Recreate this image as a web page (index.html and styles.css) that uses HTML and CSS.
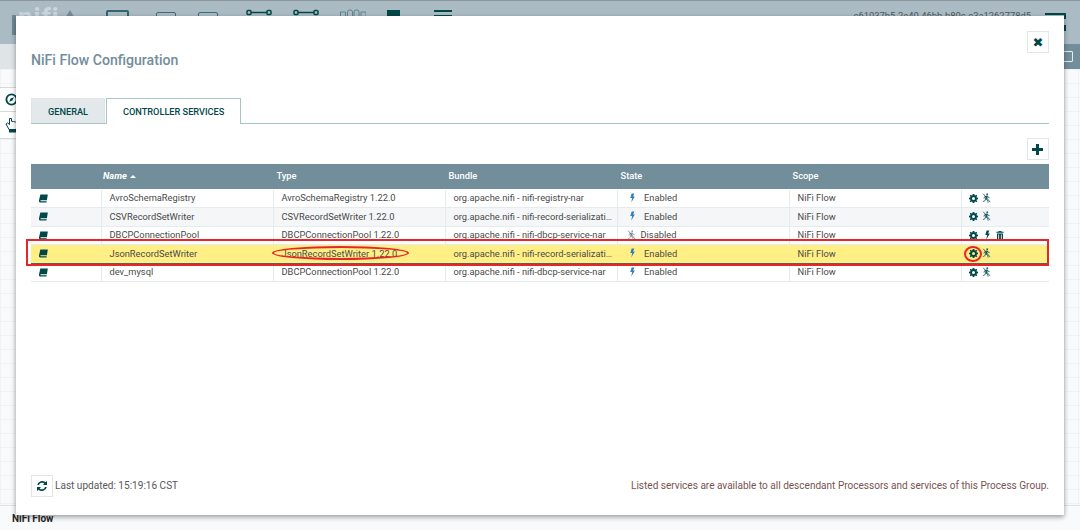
FILE: index.html
```html
<!DOCTYPE html>
<html lang="en">
<head>
<meta charset="utf-8">
<title>NiFi Flow Configuration</title>
<link rel="stylesheet" href="styles.css">
</head>
<body>
<svg class="defs" width="0" height="0" aria-hidden="true">
  <symbol id="book" viewBox="0 0 10 9"><path d="M1.500 0h8.300L8.800 6.400H1.900a.8.800 0 0 0 0 1.200h6.700l-.3 1.400H1.200C.2 9 0 8 0 6.800z"/></symbol>
  <symbol id="bolt" viewBox="0 0 6 11"><path d="M2 0h3.200L3.700 3.600h2.100L1.500 11l1.100-5.600H.4z"/></symbol>
  <symbol id="gear" viewBox="0 0 12 12"><path fill-rule="evenodd" d="M4.900 0h2.200l.3 1.600 1 .4L9.800 1l1.200 1.200-1 1.400.4 1 1.600.3v2.200l-1.600.3-.4 1 1 1.400L9.800 11l-1.400-1-1 .4-.3 1.600H4.900l-.3-1.600-1-.4-1.400 1L1 9.800l1-1.400-.4-1L0 7.100V4.900l1.600-.3.4-1-1-1.400L2.200 1l1.400 1 1-.4zM6 4a2 2 0 1 0 0 4 2 2 0 0 0 0-4z"/></symbol>
  <symbol id="run" viewBox="0 0 11 12"><circle cx="6.400" cy="1.300" r="1.200"/><path d="M5.200 3l2 .3 1 1.700 1.600.6-.3.8-2.100-.7-.6-1-.8 2.400 1.600 1.600.4 3h-1l-.5-2.500-1.900-1.400-.7 1.900-2.600 1.200-.4-.9 2.200-1 1.200-4-1 .4-.6 1.500-.9-.3.800-2z"/><path class="slash" d="M1.500.8l8.500 10.200"/></symbol>
  <symbol id="trash" viewBox="0 0 9 11"><path fill-rule="evenodd" d="M3 0h3l.5 1H9v1.200H0V1h2.500zM.8 3h7.400v8H.8zM2.400 4.300v5.400h1V4.300zM5.600 4.300v5.400h1V4.300z"/></symbol>
</svg>

<div class="app">
  <header class="topbar">
    <div class="logo"><span class="logo-bar"></span><span class="logo-text">nifi</span><span class="logo-tri"></span></div>
    <div class="toolbar">
      <span class="tool tool-box"></span>
      <span class="tool tool-frame"></span>
      <span class="tool tool-frame"></span>
      <svg class="tool-link" viewBox="0 0 26 8"><rect x="1" y="1.500" width="4" height="4" rx="1"/><rect x="21" y="1.500" width="4" height="4" rx="1"/><path d="M5 3.500h16"/></svg>
      <svg class="tool-link" viewBox="0 0 26 8"><rect x="1" y="1.500" width="4" height="4" rx="1"/><rect x="21" y="1.500" width="4" height="4" rx="1"/><path d="M5 3.500h16"/></svg>
      <svg class="tool-group" viewBox="0 0 26 10"><rect x=".5" y="3" width="5" height="7"/><rect x="7.500" y="1" width="5" height="9" rx="2"/><rect x="14" y="1" width="5" height="9" rx="2"/><rect x="21" y="3" width="5" height="7"/></svg>
      <span class="tool-solid"></span>
      <span class="tool-lines"></span>
    </div>
    <div class="uuid">c61037b5-2e40-46bb-b80c-c3a1262778d5</div>
    <div class="burger"></div>
  </header>
  <div class="subbar">
    <div class="subbar-left"></div>
    <div class="subbar-right"><span class="note-icon"></span></div>
  </div>
  <div class="canvas">
    <div class="palette">
      <div class="palette-row palette-first">
        <svg class="compass" viewBox="0 0 14 14"><circle cx="7" cy="7" r="5.500"/><path class="needle" d="M9.500 4.500L8 8 4.500 9.500 6 6z"/></svg>
      </div>
      <div class="palette-row">
        <svg class="hand" viewBox="0 0 14 16"><path d="M4.500 1.500v6L2.500 6 1 7l3 5.500h7l1.500-4V5.500L10.500 5 8.500 4.500l-2-.2V1.500z"/><rect x="4" y="13" width="7.500" height="2.500"/></svg>
      </div>
    </div>
  </div>
  <div class="breadcrumb"><span class="flow-name">NiFi Flow</span></div>

  <section class="dialog">
    <div class="dialog-head">
      <h1 class="dialog-title">NiFi Flow Configuration</h1>
      <button class="icon-btn" type="button" aria-label="Close"><span class="glyph-x">&#10006;</span></button>
    </div>
    <div class="tabs">
      <div class="tab">GENERAL</div>
      <div class="tab tab-active">CONTROLLER SERVICES</div>
    </div>
    <div class="add-row">
      <button class="icon-btn" type="button" aria-label="Add"><span class="glyph-plus"></span></button>
    </div>
    <table class="grid">
      <colgroup>
        <col class="c-icon"><col class="c-wide"><col class="c-wide"><col class="c-wide"><col class="c-wide"><col class="c-wide"><col class="c-act">
      </colgroup>
      <thead>
        <tr><th></th><th class="th-name">Name <span class="sort"></span></th><th>Type</th><th>Bundle</th><th>State</th><th>Scope</th><th></th></tr>
      </thead>
      <tbody>
        <tr>
          <td class="td-icon"><svg class="i-book"><use href="#book"/></svg></td>
          <td>AvroSchemaRegistry</td><td>AvroSchemaRegistry 1.22.0</td><td>org.apache.nifi - nifi-registry-nar</td>
          <td class="td-state"><svg class="i-bolt"><use href="#bolt"/></svg>Enabled</td><td>NiFi Flow</td>
          <td class="td-act"><svg class="i-gear"><use href="#gear"/></svg><svg class="i-run"><use href="#run"/></svg></td>
        </tr>
        <tr class="even">
          <td class="td-icon"><svg class="i-book"><use href="#book"/></svg></td>
          <td>CSVRecordSetWriter</td><td>CSVRecordSetWriter 1.22.0</td><td>org.apache.nifi - nifi-record-serializati…</td>
          <td class="td-state"><svg class="i-bolt"><use href="#bolt"/></svg>Enabled</td><td>NiFi Flow</td>
          <td class="td-act"><svg class="i-gear"><use href="#gear"/></svg><svg class="i-run"><use href="#run"/></svg></td>
        </tr>
        <tr>
          <td class="td-icon"><svg class="i-book"><use href="#book"/></svg></td>
          <td>DBCPConnectionPool</td><td>DBCPConnectionPool 1.22.0</td><td>org.apache.nifi - nifi-dbcp-service-nar</td>
          <td class="td-state td-disabled"><svg class="i-run i-run-off"><use href="#run"/></svg>Disabled</td><td>NiFi Flow</td>
          <td class="td-act"><svg class="i-gear"><use href="#gear"/></svg><svg class="i-bolt-dark"><use href="#bolt"/></svg><svg class="i-trash"><use href="#trash"/></svg></td>
        </tr>
        <tr class="selected">
          <td class="td-icon"><svg class="i-book"><use href="#book"/></svg></td>
          <td>JsonRecordSetWriter</td><td>JsonRecordSetWriter 1.22.0</td><td>org.apache.nifi - nifi-record-serializati…</td>
          <td class="td-state"><svg class="i-bolt"><use href="#bolt"/></svg>Enabled</td><td>NiFi Flow</td>
          <td class="td-act"><svg class="i-gear"><use href="#gear"/></svg><svg class="i-run"><use href="#run"/></svg></td>
        </tr>
        <tr>
          <td class="td-icon"><svg class="i-book"><use href="#book"/></svg></td>
          <td>dev_mysql</td><td>DBCPConnectionPool 1.22.0</td><td>org.apache.nifi - nifi-dbcp-service-nar</td>
          <td class="td-state"><svg class="i-bolt"><use href="#bolt"/></svg>Enabled</td><td>NiFi Flow</td>
          <td class="td-act"><svg class="i-gear"><use href="#gear"/></svg><svg class="i-run"><use href="#run"/></svg></td>
        </tr>
      </tbody>
    </table>
    <div class="dialog-foot">
      <button class="icon-btn" type="button" aria-label="Refresh">
        <svg class="i-refresh" viewBox="0 0 12 12"><path d="M1.200 5A5 5 0 0 1 9.500 2.300L11 1v4H7l1.300-1.400A3.200 3.200 0 0 0 3 5zM10.800 7A5 5 0 0 1 2.500 9.700L1 11V7h4L3.700 8.400A3.200 3.200 0 0 0 9 7z"/></svg>
      </button>
      <span class="updated">Last updated: 15:19:16 CST</span>
      <span class="foot-note">Listed services are available to all descendant Processors and services of this Process Group.</span>
    </div>
  </section>

  <div class="mark mark-rect"></div>
  <div class="mark mark-oval"></div>
  <div class="mark mark-circle"></div>
</div>
</body>
</html>
```

FILE: styles.css
```css
* { box-sizing: border-box; }
html, body { margin: 0; padding: 0; }
body { font-family: Roboto, "Liberation Sans", sans-serif; background: #f9fafb; }
.defs { position: absolute; }

.app {
  position: relative;
  width: 1080px;
  height: 530px;
  overflow: hidden;
  display: flex;
  flex-direction: column;
  background: #f9fafb;
}

/* Dimmed page behind the dialog */
.topbar {
  flex: none;
  height: 44px;
  background: #aabbc3;
  border-top: 1px solid #8b979c;
  display: flex;
  align-items: flex-start;
  position: relative;
}
.logo { width: 106px; padding: 3px 0 0 12px; display: flex; height: 40px; flex: none; }
.logo-bar { width: 4px; height: 20px; margin-top: 11px; background: #6f8893; flex: none; }
.logo-text { font: 700 26px/26px Roboto, sans-serif; color: #c9d6dc; width: 46px; letter-spacing: 1px; margin-left: 2px; }
.logo-tri { width: 0; height: 0; margin-top: 6px; border-left: 6px solid transparent; border-right: 6px solid transparent; border-bottom: 10px solid #728e9b; margin-left: 0; }
.toolbar { display: flex; align-items: flex-start; flex: none; }
.tool { display: block; }
.tool-box { width: 23px; height: 20px; margin: 9px 0 0 0; border: 2px solid #2f6670; border-radius: 2px; }
.tool-frame { width: 20px; height: 20px; margin: 11px 0 0 0; border: 1px solid #3d6e76; border-radius: 2px; }
.tool-box + .tool-frame { margin-left: 27px; }
.tool-frame + .tool-frame { margin-left: 22px; }
.tool-link { width: 26px; height: 8px; margin: 8px 0 0 0; fill: none; stroke: #004849; stroke-width: 1.500; }
.tool-frame + .tool-link { margin-left: 28px; }
.tool-link + .tool-link { margin-left: 21px; }
.tool-group { width: 26px; height: 10px; margin: 8px 0 0 21px; fill: none; stroke: #3d6e76; stroke-width: .7; }
.tool-solid { width: 13px; height: 7px; margin: 9px 0 0 21px; background: #004849; }
.tool-lines { width: 18px; height: 7px; margin: 9px 0 0 34px; border-top: 2px solid #004849; border-bottom: 2px solid #004849; }
.uuid { position: absolute; left: 841px; top: 9px; width: 190px; text-align: right; font-size: 9.400px; line-height: 12px; color: #4a5a60; white-space: nowrap; }
.burger { position: absolute; left: 1045px; top: 12px; width: 21px; height: 18px; border-top: 2px solid #004849; border-right: 2px dashed #004849; }

.subbar { flex: none; height: 25px; display: flex; }
.subbar-left { width: 540px; background: #dfe4e7; }
.subbar-right { flex: 1; background: #dfe4e7 linear-gradient(90deg, #dfe4e7 97%, #728e9b 97%); position: relative; }
.note-icon { position: absolute; right: 7px; top: 7px; width: 10px; height: 11px; border: 1px solid #e6ecef; border-radius: 1px; }

.canvas {
  flex: 1;
  position: relative;
  background-color: #f9fafb;
  background-image:
    linear-gradient(#f0f2f4 1px, transparent 1px),
    linear-gradient(90deg, #f0f2f4 1px, transparent 1px);
  background-size: 14px 14px;
}
.palette { position: absolute; left: 0; top: 18px; width: 16px; background: #fff; border-top: 1px solid #d4dade; border-bottom: 1px solid #d4dade; }
.palette-row { height: 26px; display: flex; align-items: center; padding-left: 5px; }
.palette-first { height: 24px; border-bottom: 1px solid #d4dade; }
.compass { width: 13px; height: 13px; fill: none; stroke: #004849; stroke-width: 2; flex: none; }
.needle { fill: #004849; stroke: none; }
.hand { width: 14px; height: 16px; fill: #fff; stroke: #004849; stroke-width: 1; flex: none; }
.hand rect { fill: #004849; stroke: none; }
.breadcrumb { flex: none; height: 25px; border-top: 1px solid #dde1e4; padding: 7px 0 0 12px; background: #f9fafb; }
.flow-name { display: block; font-size: 10px; line-height: 12px; font-weight: 700; color: #262626; }

/* Dialog */
.dialog {
  position: absolute;
  left: 16px;
  top: 16px;
  width: 1048px;
  height: 499px;
  background: #fff;
  padding: 15px 15px 19px;
  display: flex;
  flex-direction: column;
  box-shadow: 0 2px 5px rgba(0, 0, 0, .4);
}
.dialog-head { flex: none; height: 67px; display: flex; justify-content: space-between; align-items: flex-start; }
.dialog-title { margin: 21px 0 0; font-size: 14.100px; line-height: 16px; font-weight: 500; color: #728e9b; }
.icon-btn {
  flex: none;
  width: 22px;
  height: 22px;
  padding: 0;
  background: #fff;
  border: 1px solid #dfe7ea;
  display: flex;
  align-items: center;
  justify-content: center;
}
.glyph-x { font-size: 13px; line-height: 13px; color: #004849; font-family: "DejaVu Sans", sans-serif; }
.glyph-plus { width: 11px; height: 11px; margin-left: -1px; background: linear-gradient(#004849, #004849) center / 11px 3px no-repeat, linear-gradient(#004849, #004849) center / 3px 11px no-repeat; }

.tabs { flex: none; display: flex; height: 26px; border-bottom: 1px solid #a9c4c4; }
.tab {
  height: 25px;
  padding: 0 16px;
  font-size: 9.200px;
  line-height: 25px;
  font-weight: 500;
  color: #004849;
  background: #e3e8eb;
  border-top: 1px solid #dfe4e7;
  border-right: 1px solid #dfe4e7;
  border-left: 1px solid #dfe4e7;
  margin-right: 1px;
}
.tab-active { height: 26px; background: #fff; border-color: #a9c4c4; }

.add-row { flex: none; display: flex; justify-content: flex-end; margin: 14px 0 4px; }

.grid { flex: none; width: 1018px; table-layout: fixed; border-collapse: collapse; font-size: 9.300px; }
.c-icon { width: 70px; }
.c-wide { width: 172px; }
.c-act { width: 88px; }
.grid th {
  height: 25px;
  background: #728e9b;
  color: #fff;
  font-weight: 500;
  text-align: left;
  padding: 0 0 2px 3.500px;
  border-bottom: 1px solid #fff;
}
.grid .th-name { font-style: italic; font-weight: 700; padding-left: 2px; }
.sort { display: inline-block; width: 0; height: 0; margin: 0 0 1px 1px; border-left: 3px solid transparent; border-right: 3px solid transparent; border-bottom: 3px solid #fff; }
.grid td {
  height: 18.500px;
  padding: 0 0 0 8px;
  line-height: 12px;
  color: #4a4a4a;
  white-space: nowrap;
  overflow: hidden;
  border-bottom: 1px solid #e6ebee;
  border-left: 1px solid #e6ebee;
}
.grid td.td-icon { border-left: none; padding-left: 8px; }
.even td { background: #f4f6f7; }
.selected td {
  background: #ffef85;
  border-top: 1px solid #5e5e5e;
  border-bottom: 1px solid #5e5e5e;
  border-left-color: #ffef85;
}
.grid td.td-state { padding-left: 12.500px; }
.grid td.td-disabled { padding-left: 9px; }
.grid td.td-act { padding-left: 7px; }
.grid td svg { vertical-align: -1.500px; }

.i-book { width: 9px; height: 9px; fill: #004849; }
.i-bolt { width: 5px; height: 10px; fill: #2f7ebd; margin-right: 9px; }
.i-bolt-dark { width: 5px; height: 10px; fill: #004849; margin: 0 6px 0 3px; }
.i-gear { width: 9px; height: 9px; fill: #004849; margin-right: 4px; }
.i-run { width: 9px; height: 10px; fill: #2f6670; color: #004849; }
.i-run-off { fill: #8ba3ad; color: #4a6a76; margin-right: 5px; }
.i-trash { width: 8px; height: 9px; fill: #004849; }
.slash { stroke: currentColor; stroke-width: .9; fill: none; }

.dialog-foot { margin-top: auto; display: flex; align-items: center; font-size: 10.050px; line-height: 12px; height: 21px; }
.i-refresh { width: 12px; height: 12px; fill: #004849; }
.updated { margin-left: 2px; color: #57565a; }
.foot-note { margin-left: auto; color: #775351; }

/* Red review annotations drawn over the screenshot */
.mark { position: absolute; border: 2px solid #e8262a; }
.mark-rect { left: 26px; top: 239px; width: 1023px; height: 27px; }
.mark-oval { left: 272px; top: 246px; width: 137px; height: 14px; border-radius: 50%; }
.mark-circle { left: 964px; top: 246px; width: 18px; height: 16px; border-radius: 50%; }
```
